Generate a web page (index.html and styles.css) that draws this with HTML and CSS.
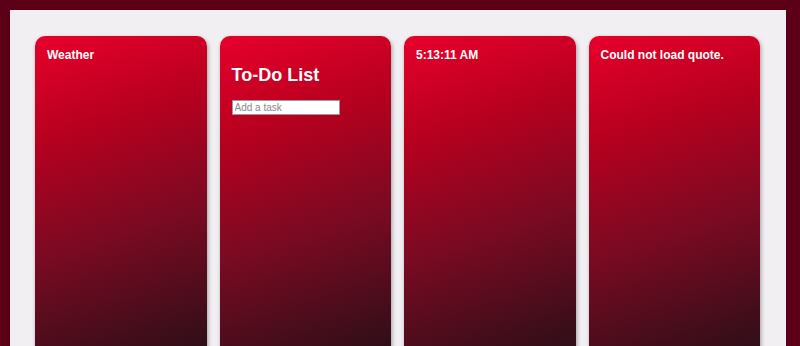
FILE: index.html
```html
<!DOCTYPE html>
<html lang="en">
<head>
<meta charset="utf-8">
<title>Dashboard</title>
<link rel="stylesheet" href="styles.css">
</head>
<body>
<main class="panel">
  <section class="card">
    <div class="card-title">Weather</div>
  </section>
  <section class="card">
    <h2 class="todo-title">To-Do List</h2>
    <input class="task-input" type="text" placeholder="Add a task">
  </section>
  <section class="card">
    <div class="card-title">5:13:11 AM</div>
  </section>
  <section class="card">
    <div class="card-title">Could not load quote.</div>
  </section>
</main>
</body>
</html>
```

FILE: styles.css
```css
html, body {
  margin: 0;
  padding: 0;
}
body {
  background: #5c0017;
  font-family: "Liberation Sans", Arial, sans-serif;
  overflow: hidden;
}
.panel {
  margin: 10px 14px 0 10px;
  padding: 26px 26px 25px 25px;
  background: #f2eff3;
  box-shadow: 0 0 1px rgba(0,0,0,0.35);
  display: grid;
  grid-template-columns: repeat(4, 1fr);
  gap: 13px;
}
.card {
  height: 296px;
  padding: 12px;
  border-radius: 10px;
  color: #fff;
  background: linear-gradient(162deg, #e8002b 0%, #b8001f 28%, #7a0a22 60%, #2a0f17 100%);
  box-shadow: 1px 2px 4px rgba(0,0,0,0.35);
}
.card-title {
  font-size: 12px;
  font-weight: bold;
  line-height: 14px;
}
.todo-title {
  font-size: 18px;
  font-weight: bold;
  margin: 17px 0 15px;
  line-height: 20px;
}
.task-input {
  display: block;
  box-sizing: border-box;
  width: 108px;
  height: 15px;
  padding: 0 2px;
  border: 1px solid #999;
  background: #fff;
  font-family: "Liberation Sans", Arial, sans-serif;
  font-size: 10px;
  color: #333;
}
.task-input::placeholder {
  color: #888;
}
```
